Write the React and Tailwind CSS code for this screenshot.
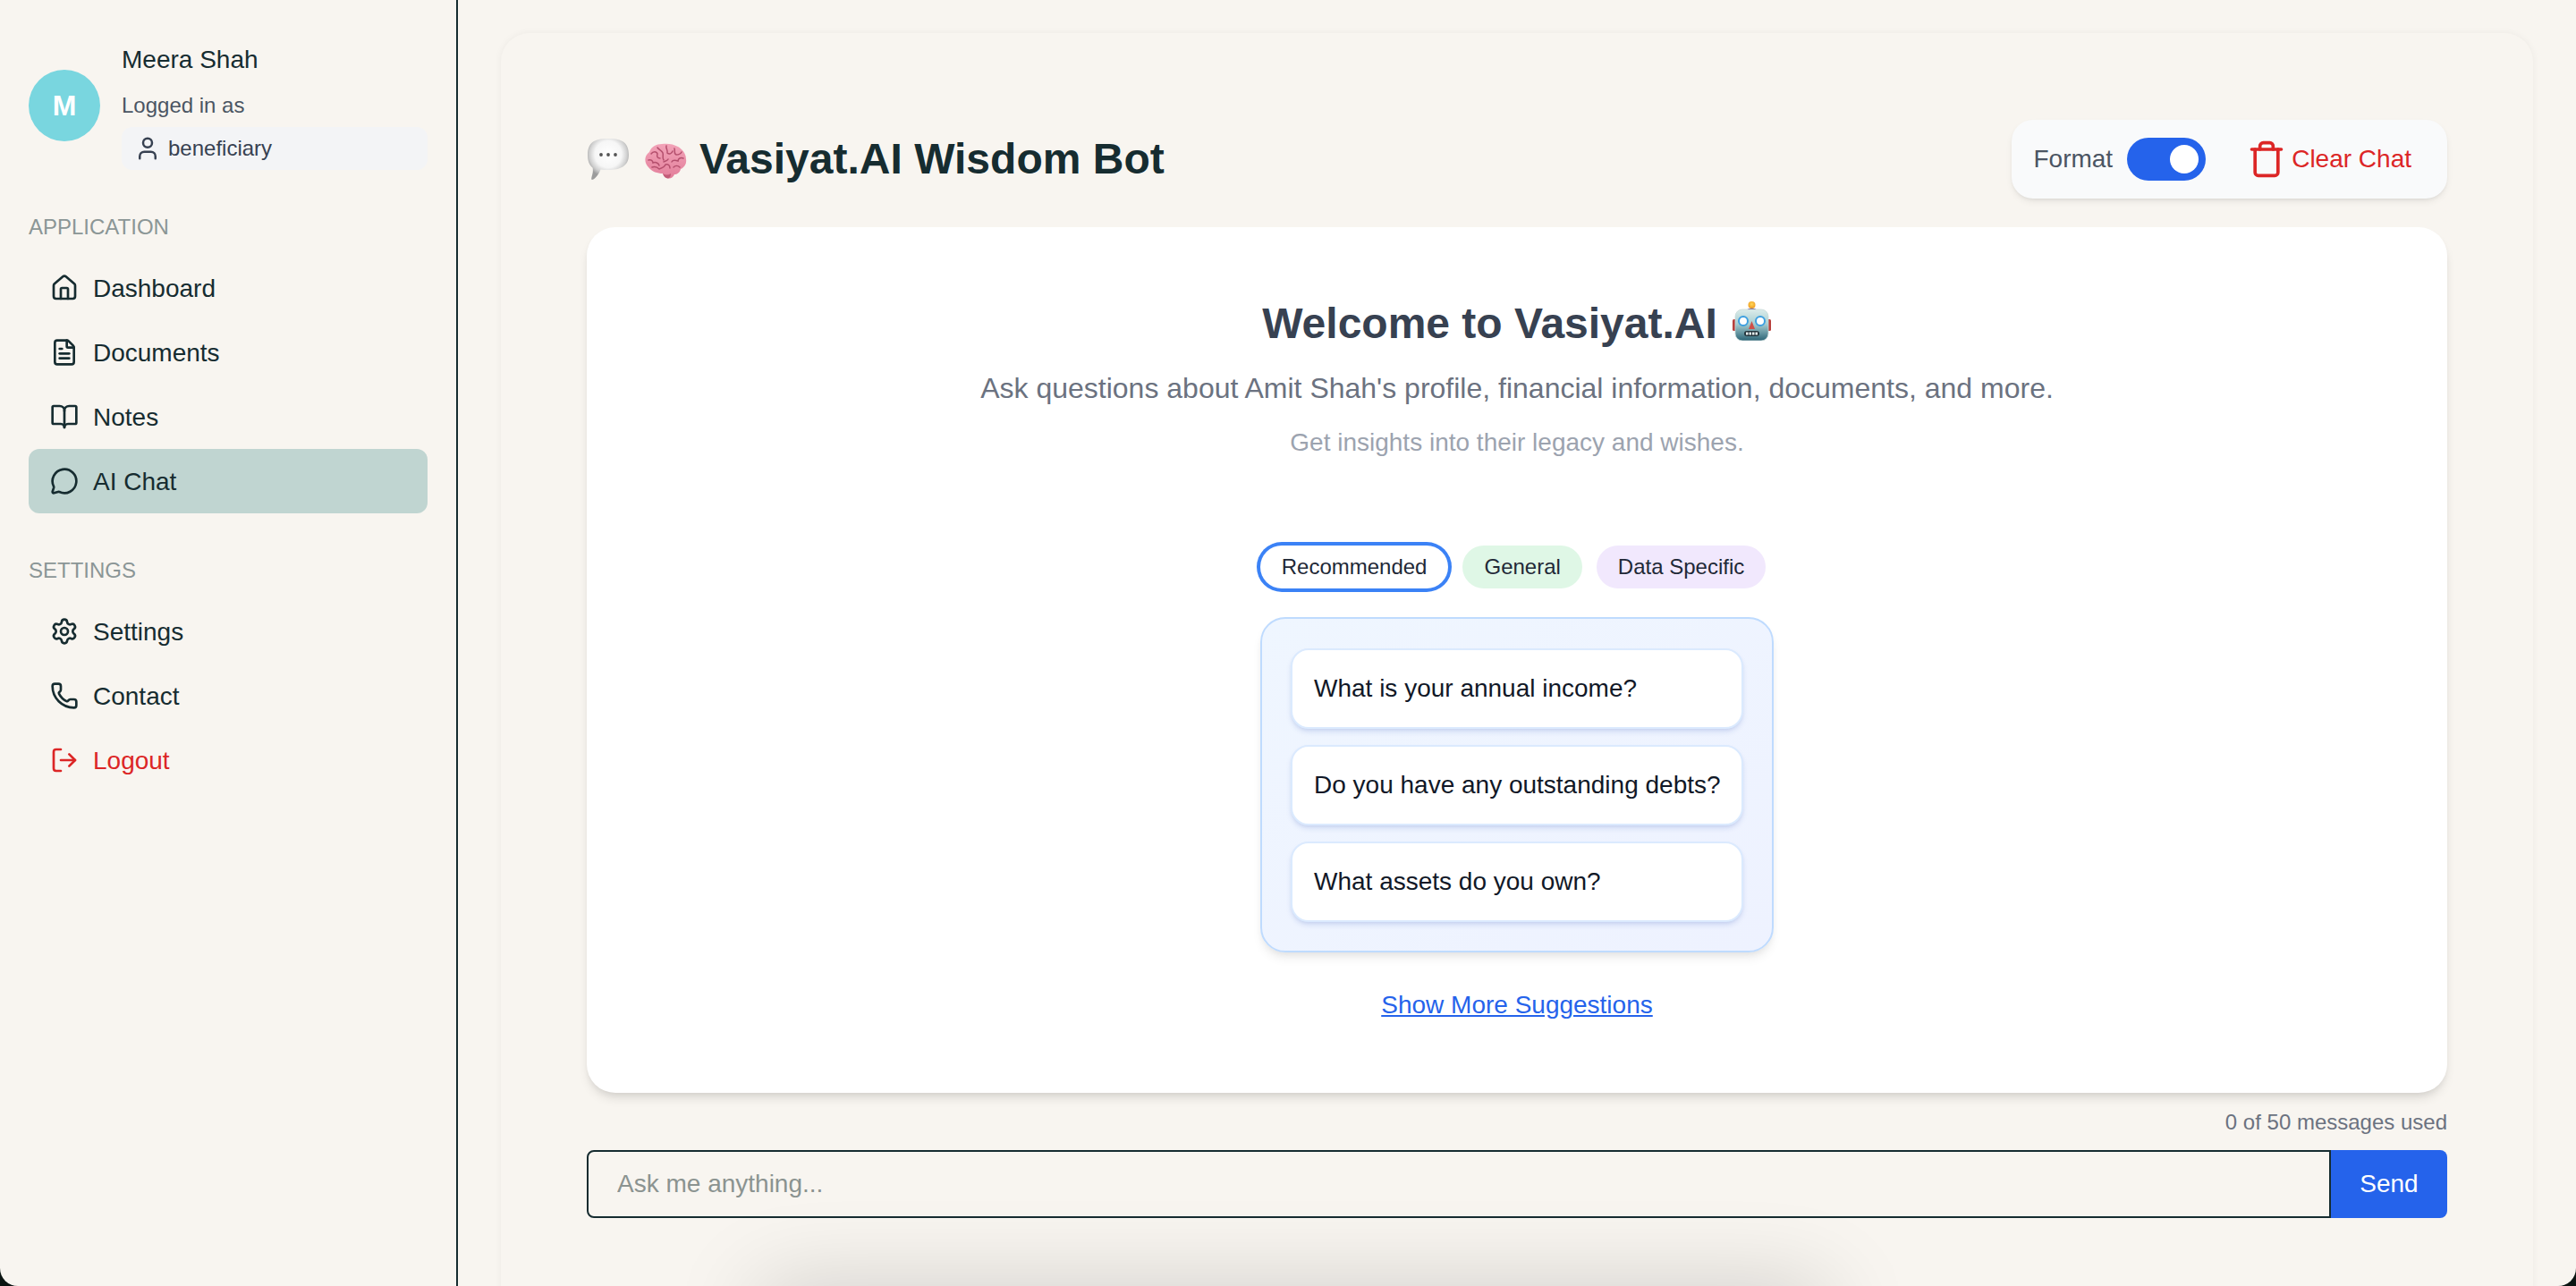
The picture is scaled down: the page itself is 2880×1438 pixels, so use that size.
import React from "react";
import {
  House,
  FileText,
  BookOpen,
  MessageCircle,
  Settings,
  Phone,
  LogOut,
  User,
  Trash,
} from "lucide-react";

function BubbleEmoji() {
  return (
    <svg width="48" height="48" viewBox="0 0 48 48" className="shrink-0">
      <defs>
        <radialGradient id="bubble" cx="50%" cy="38%" r="56%">
          <stop offset="0%" stopColor="#ffffff" />
          <stop offset="58%" stopColor="#f6f6f6" />
          <stop offset="82%" stopColor="#cfcfcf" />
          <stop offset="100%" stopColor="#9c9c9c" />
        </radialGradient>
      </defs>
      <path
        d="M24 1C36 1 47 3 47 19C47 32 37 36 24 36C21 36 18 36 15.500 35.500C14 40 10 46 6 47C4.500 47 5.500 44 6.500 40C7 37.500 7 35 6.500 33.500C2.500 30.500 1 25 1 19C1 3 12 1 24 1Z"
        fill="url(#bubble)"
      />
      <circle cx="16" cy="19" r="1.900" fill="#555555" />
      <circle cx="24" cy="19" r="1.900" fill="#555555" />
      <circle cx="32" cy="19" r="1.900" fill="#555555" />
    </svg>
  );
}

function BrainEmoji() {
  return (
    <svg width="48" height="40" viewBox="0 0 48 40" className="shrink-0">
      <defs>
        <linearGradient id="brain" x1="0" y1="0" x2="0" y2="1">
          <stop offset="0%" stopColor="#f2a3b8" />
          <stop offset="100%" stopColor="#e37f9b" />
        </linearGradient>
      </defs>
      <path
        d="M6 10C8 4 14 1 20 1C26 0 33 1 38 4C43 7 47 12 47 18C48 23 45 27 41 29C40 33 37 35 34 35C33 38 30 40 27 39.500C24 39.500 22 37 21 34C15 34 9 32 5 27C1 23 -1 15 6 10Z"
        fill="url(#brain)"
      />
      <path
        d="M21 34C24 36 27 36 30 34C30 37 29 39 27 39.500C24 39.500 22 37 21 34Z"
        fill="#c25c78"
      />
      <g fill="none" stroke="#b44f6d" strokeWidth="1.500" strokeLinecap="round">
        <path d="M8 12C10 9 14 9 15 12C14 15 15 17 18 17" />
        <path d="M15 5C17 8 20 8 21 11C22 14 20 16 22 19" />
        <path d="M25 3C24 6 27 8 26 11C28 13 31 12 32 9" />
        <path d="M34 6C35 9 33 12 36 13C39 13 41 12 42 10" />
        <path d="M44 17C41 16 38 17 38 20C35 19 32 19 31 21" />
        <path d="M5 19C8 18 10 20 10 22C13 21 16 22 17 25" />
        <path d="M9 27C12 26 15 27 17 29C20 28 23 27 24 24C27 23 29 25 29 28" />
        <path d="M33 27C35 25 38 25 40 27" />
        <path d="M22 21C24 20 26 20 27 18" />
      </g>
    </svg>
  );
}

function RobotEmoji() {
  return (
    <svg width="44" height="44" viewBox="0 0 44 44" className="mb-[6px] inline-block shrink-0">
      <defs>
        <linearGradient id="head" x1="0" y1="0" x2="0" y2="1">
          <stop offset="0%" stopColor="#dcecea" />
          <stop offset="45%" stopColor="#a9cfd2" />
          <stop offset="100%" stopColor="#2c6577" />
        </linearGradient>
        <radialGradient id="bulb" cx="50%" cy="40%" r="60%">
          <stop offset="0%" stopColor="#ffd75a" />
          <stop offset="100%" stopColor="#ee9a1c" />
        </radialGradient>
      </defs>
      <rect x="0" y="20" width="5" height="13" rx="1.500" fill="#b8403c" />
      <rect x="38" y="20" width="5" height="13" rx="1.500" fill="#b8403c" />
      <circle cx="21.500" cy="4" r="4" fill="url(#bulb)" />
      <path d="M16 10C16 7 27 7 27 10Z" fill="#5b4b8a" />
      <rect x="3" y="9" width="37" height="35" rx="8" fill="url(#head)" stroke="#c9d9d8" strokeWidth="0.800" />
      <circle cx="12" cy="22" r="5" fill="#ffffff" stroke="#3d9fe0" strokeWidth="2" />
      <circle cx="31" cy="22" r="5" fill="#ffffff" stroke="#3d9fe0" strokeWidth="2" />
      <path d="M21.500 22L25 31H18Z" fill="#cf4f48" />
      <rect x="13" y="33" width="17" height="6" rx="3" fill="#23343c" />
      <g fill="#e8eeee">
        <rect x="15" y="34.500" width="2.500" height="3" />
        <rect x="18.500" y="34.500" width="2.500" height="3" />
        <rect x="22" y="34.500" width="2.500" height="3" />
        <rect x="25.500" y="34.500" width="2.500" height="3" />
      </g>
    </svg>
  );
}

function NavItem({ icon: Icon, label, active, danger }) {
  return (
    <div
      className={`flex h-[72px] items-center gap-4 rounded-[12px] pl-6 text-[28px] ${
        active ? "bg-[#c0d5d1]" : ""
      } ${danger ? "text-[#dc2626]" : "text-[#162c30]"}`}
    >
      <Icon size={32} strokeWidth={2} className="shrink-0" />
      <span className="mt-[2px]">{label}</span>
    </div>
  );
}

function SectionLabel({ children }) {
  return (
    <div className="mt-[48px] mb-[16px] text-[24px] leading-8 uppercase text-[#8b9696]">
      {children}
    </div>
  );
}

function Sidebar() {
  return (
    <aside className="flex w-[512px] shrink-0 flex-col border-r-2 border-[#162c30] pl-8 pr-8 pt-[46px]">
      <div className="flex items-center gap-6">
        <div className="flex h-20 w-20 shrink-0 items-center justify-center rounded-full bg-[#79d6df] text-[32px] font-bold text-white">
          M
        </div>
        <div className="flex min-w-0 flex-1 flex-col">
          <div className="pt-px text-[28px] leading-10 text-[#162c30]">Meera Shah</div>
          <div className="mt-[15px] text-[24px] leading-8 text-[#4b5563]">Logged in as</div>
          <div className="mt-2 flex h-12 items-center gap-2 rounded-[12px] bg-[#f3f4f6] pl-[14px] text-[24px] text-[#374151]">
            <User size={30} strokeWidth={2} className="shrink-0" />
            <span>beneficiary</span>
          </div>
        </div>
      </div>

      <SectionLabel>Application</SectionLabel>
      <nav className="flex flex-col">
        <NavItem icon={House} label="Dashboard" />
        <NavItem icon={FileText} label="Documents" />
        <NavItem icon={BookOpen} label="Notes" />
        <NavItem icon={MessageCircle} label="AI Chat" active />
      </nav>

      <SectionLabel>Settings</SectionLabel>
      <nav className="flex flex-col">
        <NavItem icon={Settings} label="Settings" />
        <NavItem icon={Phone} label="Contact" />
        <NavItem icon={LogOut} label="Logout" danger />
      </nav>
    </aside>
  );
}

function Header() {
  return (
    <div className="flex h-[88px] items-center justify-between">
      <div className="flex items-center">
        <BubbleEmoji />
        <span className="ml-4 mt-1">
          <BrainEmoji />
        </span>
        <h1 className="ml-[14px] text-[48px] font-bold leading-[56px] text-[#162c30]">
          Vasiyat.AI Wisdom Bot
        </h1>
      </div>
      <div className="flex h-[88px] items-center rounded-[24px] bg-[#f9fafb] pl-6 pr-10 shadow-[0_4px_8px_-2px_rgba(0,0,0,0.1),0_2px_4px_-2px_rgba(0,0,0,0.08)]">
        <span className="text-[28px] text-[#4b5563]">Format</span>
        <div className="ml-4 flex h-12 w-[88px] items-center justify-end rounded-full bg-[#2563eb] pr-2">
          <div className="h-8 w-8 rounded-full bg-white" />
        </div>
        <div className="ml-[46px] flex items-center gap-[6px] text-[28px] text-[#dc2626]">
          <Trash size={44} strokeWidth={2} className="shrink-0" />
          <span>Clear Chat</span>
        </div>
      </div>
    </div>
  );
}

function SuggestionCard({ children }) {
  return (
    <div className="flex h-[90px] items-center whitespace-nowrap rounded-[20px] border-2 border-[#dbeafe] bg-white px-6 text-[28px] text-[#111827] shadow-[0_4px_6px_-1px_rgba(30,64,175,0.15),0_2px_4px_-2px_rgba(30,64,175,0.12)]">
      {children}
    </div>
  );
}

function WelcomePanel() {
  return (
    <section className="mt-8 flex h-[968px] flex-col items-center rounded-[32px] bg-white pt-[80px] shadow-[0_8px_12px_-2px_rgba(0,0,0,0.1),0_4px_8px_-4px_rgba(0,0,0,0.1)]">
      <h2 className="flex items-center gap-[17px] text-[48px] font-bold leading-[56px] text-[#374151]">
        <span>Welcome to Vasiyat.AI</span>
        <RobotEmoji />
      </h2>
      <p className="mt-[22px] text-[32px] leading-[44px] text-[#6b7280]">
        Ask questions about Amit Shah's profile, financial information, documents, and more.
      </p>
      <p className="mt-[19px] text-[28px] leading-10 text-[#9ca3af]">
        Get insights into their legacy and wishes.
      </p>

      <div className="mr-[9px] mt-[95px] flex gap-4 text-[24px] text-[#1f2937]">
        <div className="flex h-12 items-center rounded-full bg-white px-6 ring-4 ring-[#3b82f6]">Recommended</div>
        <div className="flex h-12 items-center rounded-full bg-[#dff7e6] px-6">General</div>
        <div className="flex h-12 items-center rounded-full bg-[#f1e8fd] px-6">Data Specific</div>
      </div>

      <div className="mt-8 flex w-[574px] flex-col gap-[18px] rounded-[28px] border-2 border-[#bfdbfe] bg-linear-to-br from-[#eff6ff] to-[#eef2ff] px-8 pb-[32px] pt-[33px] shadow-[0_8px_12px_-2px_rgba(0,0,0,0.08),0_4px_8px_-4px_rgba(0,0,0,0.08)]">
        <SuggestionCard>What is your annual income?</SuggestionCard>
        <SuggestionCard>Do you have any outstanding debts?</SuggestionCard>
        <SuggestionCard>What assets do you own?</SuggestionCard>
      </div>

      <a className="mt-[39px] text-[28px] leading-10 text-[#2563eb] underline">Show More Suggestions</a>
    </section>
  );
}

function ChatInput() {
  return (
    <>
      <div className="mt-[17px] text-right text-[24px] leading-8 text-[#6b7280]">0 of 50 messages used</div>
      <div className="mt-[15px] flex h-[76px]">
        <input
          type="text"
          placeholder="Ask me anything..."
          className="min-w-0 flex-1 rounded-l-[8px] border-2 border-[#162c30] bg-transparent pl-8 text-[28px] outline-none placeholder:text-[#8b9390]"
        />
        <button className="w-[130px] rounded-r-[8px] bg-[#2563eb] text-[28px] text-white">Send</button>
      </div>
    </>
  );
}

export default function App() {
  return (
    <div className="relative h-screen w-full overflow-hidden bg-[#0b1512] font-['Liberation_Sans',Arial,sans-serif]">
      <div className="relative flex h-full overflow-hidden rounded-b-[20px] bg-[#f8f5f0]">
        <Sidebar />
        <main className="flex-1 px-12 pt-[37px]">
          <div className="h-[1500px] rounded-[32px] bg-[#f8f5f0] px-24 pt-[97px] shadow-[0_0_8px_rgba(0,0,0,0.05)]">
            <Header />
            <WelcomePanel />
            <ChatInput />
          </div>
        </main>
        {/* shadow of something sitting just below the fold */}
        <div className="absolute left-[850px] top-[1440px] h-20 w-[1190px] shadow-[0_0_100px_rgba(0,0,0,0.18)]" />
      </div>
    </div>
  );
}
